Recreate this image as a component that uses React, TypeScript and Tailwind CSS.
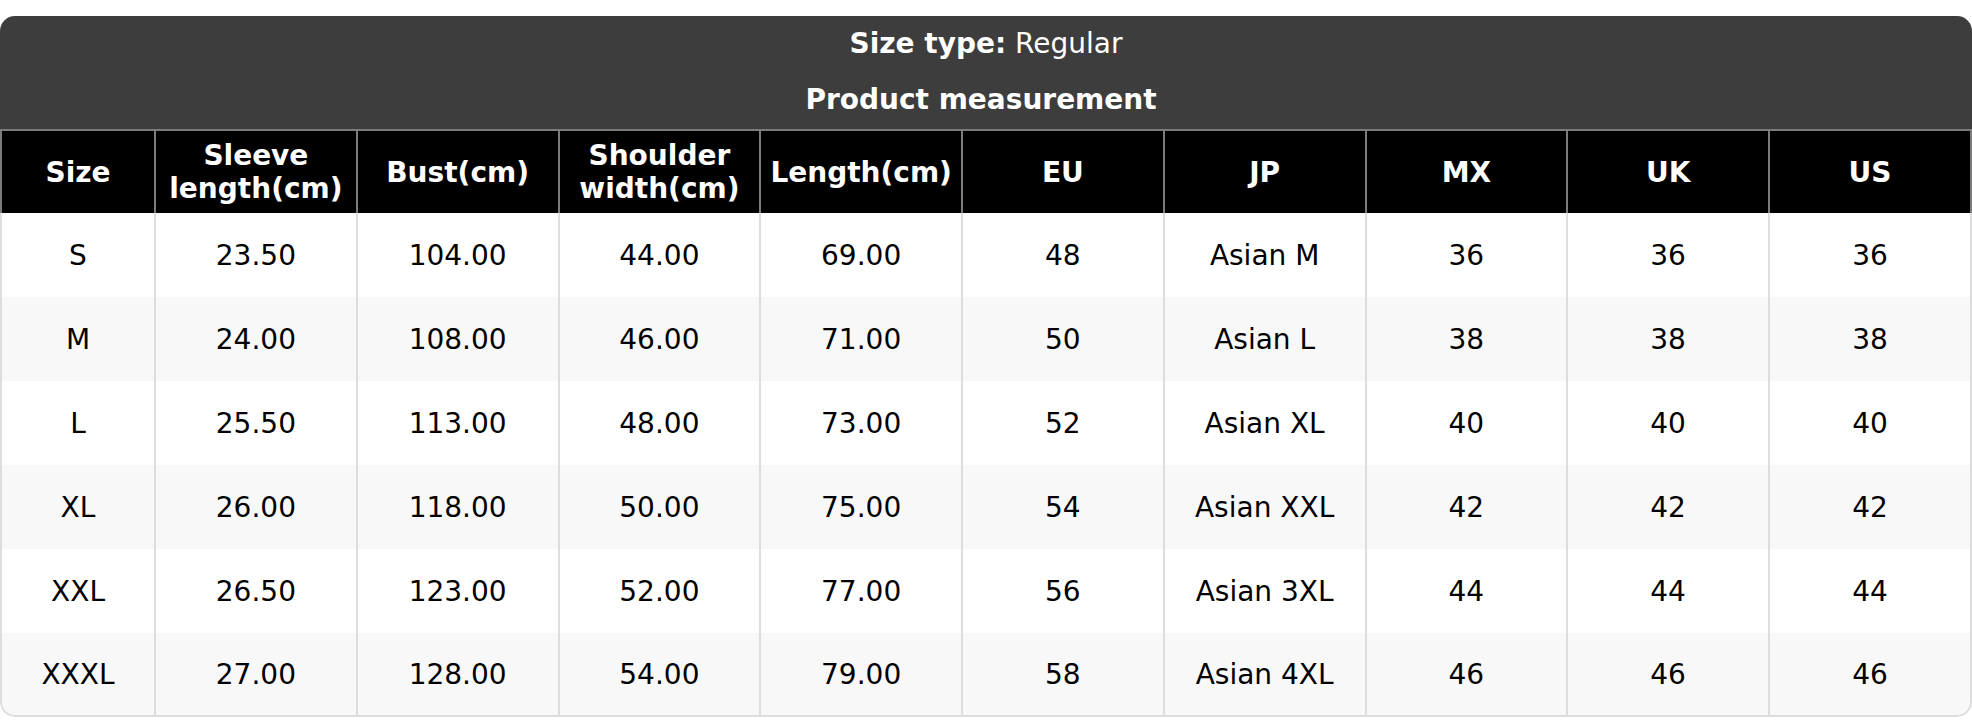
import React from "react";

const headers = [
  ["Size"],
  ["Sleeve", "length(cm)"],
  ["Bust(cm)"],
  ["Shoulder", "width(cm)"],
  ["Length(cm)"],
  ["EU"],
  ["JP"],
  ["MX"],
  ["UK"],
  ["US"],
];

const rows = [
  ["S", "23.50", "104.00", "44.00", "69.00", "48", "Asian M", "36", "36", "36"],
  ["M", "24.00", "108.00", "46.00", "71.00", "50", "Asian L", "38", "38", "38"],
  ["L", "25.50", "113.00", "48.00", "73.00", "52", "Asian XL", "40", "40", "40"],
  ["XL", "26.00", "118.00", "50.00", "75.00", "54", "Asian XXL", "42", "42", "42"],
  ["XXL", "26.50", "123.00", "52.00", "77.00", "56", "Asian 3XL", "44", "44", "44"],
  ["XXXL", "27.00", "128.00", "54.00", "79.00", "58", "Asian 4XL", "46", "46", "46"],
];

export default function App() {
  return (
    <div className="w-[1972px] h-[720px] bg-white pt-[16px] font-['DejaVu_Sans',sans-serif] text-[28px] leading-[33px]">
      <div className="rounded-[15px] overflow-hidden">
        <div className="bg-[#3d3d3d] text-white flex flex-col items-center pt-[11px] gap-[23px] h-[113px]">
          <div>
            <span className="font-bold">Size type:</span> Regular
          </div>
          <div className="font-bold mr-[10px]">Product measurement</div>
        </div>
        <div className="grid grid-cols-[154px_repeat(8,201.75px)_1fr]">
          {headers.map((h, i) => (
            <div
              key={i}
              className={
                "h-[84px] bg-black text-white font-bold flex flex-col items-center justify-center text-center border-t-2 border-t-[#7c7c7c] border-l-2 border-l-[#7c7c7c] " +
                (i === 9 ? "border-r-2 border-r-[#7c7c7c]" : "")
              }
            >
              {h.map((line, j) => (
                <div key={j}>{line}</div>
              ))}
            </div>
          ))}
          {rows.map((r, ri) =>
            r.map((c, ci) => (
              <div
                key={ri + "-" + ci}
                className={
                  "h-[84px] flex items-center justify-center text-black border-l-2 border-l-[#dddddd] " +
                  (ri % 2 === 1 ? "bg-[#f8f8f8] " : "bg-white ") +
                  (ci === 9 ? "border-r-2 border-r-[#dddddd] " : "") +
                  (ri === 5 ? "border-b-2 border-b-[#dddddd] " : "") +
                  (ri === 5 && ci === 0 ? "rounded-bl-[15px] " : "") +
                  (ri === 5 && ci === 9 ? "rounded-br-[15px] " : "")
                }
              >
                {c}
              </div>
            ))
          )}
        </div>
      </div>
    </div>
  );
}
